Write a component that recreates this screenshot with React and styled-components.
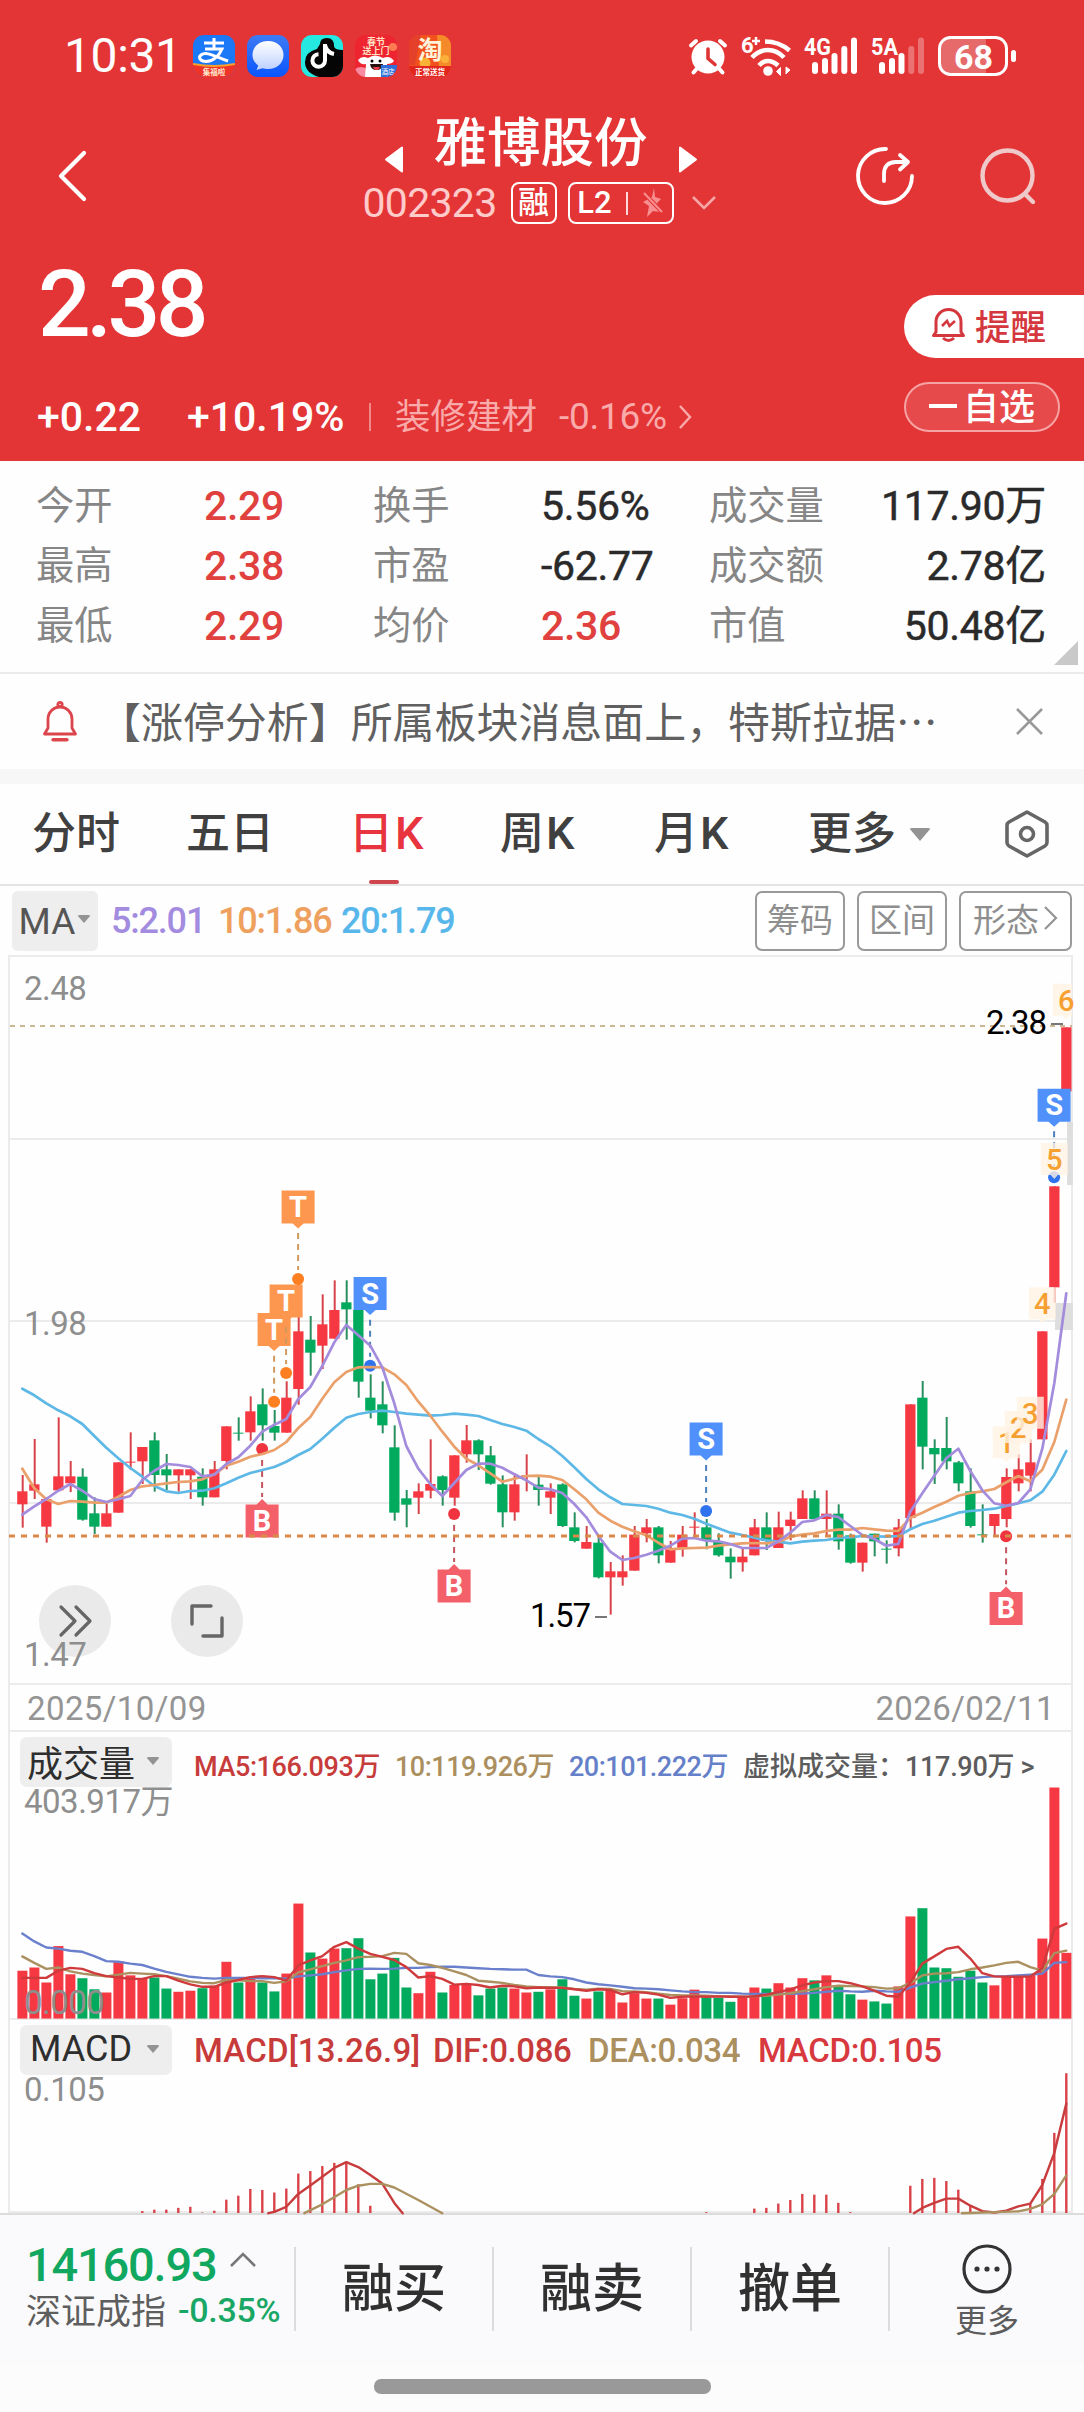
import React from 'react'
import styled, { createGlobalStyle, css } from 'styled-components'

const GlobalStyle = createGlobalStyle`
   * { box-sizing: border-box; }
   body {
      margin: 0;
      background: #fff;
      font-family: Roboto, "Noto Sans CJK SC", sans-serif;
      color: #333;
   }
   svg { display: block; flex: none; overflow: visible; }
   svg text { font-family: Roboto, "Noto Sans CJK SC", sans-serif; }
`

const RED = '#f53842'
const GREEN = '#02aa5d'

/* ---------- chart data ---------- */

// [direction, body top, body bottom, wick top, wick bottom]
const candles = [
   ['r', 934, 973, 885, 1043], ['r', 913, 932, 777, 957], ['r', 957, 1040, 952, 1088], ['r', 889, 931, 712, 931],
   ['r', 889, 910, 843, 936], ['g', 890, 1019, 865, 1022], ['g', 1000, 1040, 952, 1062], ['r', 1000, 1040, 970, 1040],
   ['r', 847, 998, 847, 998], ['r', 845, 848, 757, 870], ['r', 801, 844, 801, 912], ['g', 781, 885, 757, 935],
   ['g', 868, 886, 822, 930], ['r', 868, 886, 868, 935], ['r', 868, 886, 868, 957], ['g', 890, 952, 865, 977],
   ['r', 868, 952, 843, 952], ['r', 739, 843, 739, 868], ['g', 758, 761, 712, 782], ['r', 694, 757, 649, 782],
   ['g', 673, 736, 625, 782], ['g', 738, 758, 690, 782], ['r', 653, 758, 604, 758], ['r', 454, 627, 300, 674],
   ['g', 479, 518, 408, 587], ['r', 433, 497, 343, 567], ['r', 390, 476, 301, 476], ['g', 367, 388, 301, 479],
   ['g', 390, 605, 363, 653], ['g', 653, 692, 583, 715], ['g', 673, 736, 604, 760], ['g', 802, 998, 736, 1022],
   ['g', 955, 974, 930, 1042], ['r', 934, 953, 910, 1002], ['r', 912, 932, 778, 955], ['g', 889, 930, 886, 977],
   ['r', 826, 953, 826, 977], ['r', 781, 823, 735, 848], ['g', 781, 823, 778, 870], ['g', 826, 911, 798, 914],
   ['g', 913, 997, 886, 1042], ['r', 913, 997, 880, 1022], ['r', 886, 889, 823, 934], ['g', 914, 930, 890, 977],
   ['r', 934, 953, 910, 1002], ['g', 913, 1038, 910, 1041], ['g', 1042, 1083, 997, 1087], ['r', 1086, 1106, 1038, 1106],
   ['g', 1088, 1192, 1065, 1195], ['r', 1174, 1192, 1146, 1304], ['r', 1174, 1192, 1126, 1217], ['r', 1064, 1172, 1038, 1172],
   ['r', 1042, 1060, 1017, 1087], ['g', 1042, 1126, 1038, 1150], ['r', 1108, 1148, 1083, 1148], ['r', 1064, 1106, 1038, 1130],
   ['r', 1040, 1043, 997, 1070], ['g', 1042, 1083, 1017, 1108], ['g', 1085, 1126, 1060, 1130], ['g', 1130, 1147, 1105, 1196],
   ['r', 1130, 1147, 1105, 1175], ['r', 1042, 1126, 1017, 1126], ['g', 1042, 1083, 997, 1110], ['r', 1042, 1104, 995, 1104],
   ['r', 1019, 1038, 995, 1081], ['r', 955, 1017, 931, 1017], ['g', 955, 1017, 931, 1017], ['r', 1001, 1017, 931, 1068],
   ['g', 1001, 1084, 973, 1109], ['g', 1066, 1148, 1061, 1151], ['r', 1088, 1148, 1088, 1175], ['g', 1061, 1084, 1061, 1129],
   ['g', 1106, 1109, 1081, 1151], ['r', 1042, 1105, 1017, 1129], ['r', 673, 1014, 673, 1047], ['g', 653, 800, 603, 868],
   ['g', 804, 823, 778, 912], ['g', 804, 844, 711, 868], ['g', 847, 910, 843, 934], ['g', 934, 1038, 865, 1043],
   ['g', 1063, 1066, 973, 1088], ['r', 1002, 1038, 1002, 1066], ['r', 891, 1017, 865, 1042], ['r', 868, 910, 823, 934],
   ['r', 847, 887, 778, 934], ['r', 454, 778, 454, 778], ['r', 19, 322, 19, 368], ['r', -458, -266, -458, -266],
]

const ma5 = [1004, 979, 957, 932, 912, 932, 957, 966, 958, 948, 900, 872, 852, 855, 861, 889, 884, 852, 832, 797, 755, 734, 717, 657, 621, 558, 487, 435, 466, 497, 562, 670, 798, 866, 912, 948, 909, 870, 851, 851, 863, 883, 901, 923, 928, 939, 972, 1012, 1067, 1115, 1140, 1134, 1124, 1112, 1097, 1076, 1074, 1082, 1084, 1092, 1104, 1104, 1104, 1084, 1058, 1026, 1021, 1005, 1011, 1038, 1065, 1077, 1097, 1092, 995, 940, 887, 835, 806, 873, 931, 970, 977, 969, 928, 806, 610, 340]
const ma10 = [866, 925, 958, 972, 963, 965, 968, 968, 950, 930, 919, 915, 910, 906, 904, 898, 883, 857, 845, 830, 822, 810, 786, 744, 711, 656, 607, 576, 562, 561, 562, 583, 615, 665, 707, 755, 800, 836, 856, 880, 905, 896, 888, 887, 890, 900, 928, 958, 998, 1022, 1040, 1054, 1066, 1088, 1108, 1105, 1104, 1103, 1097, 1093, 1090, 1089, 1090, 1086, 1070, 1064, 1060, 1053, 1049, 1049, 1044, 1048, 1052, 1053, 1014, 998, 981, 965, 947, 939, 934, 927, 907, 888, 904, 869, 786, 659]
const ma20 = [626, 646, 670, 691, 709, 732, 768, 803, 835, 864, 890, 918, 934, 939, 933, 932, 925, 910, 893, 879, 870, 861, 845, 825, 807, 776, 743, 713, 702, 696, 692, 696, 701, 704, 707, 705, 701, 704, 708, 720, 732, 741, 752, 777, 799, 828, 862, 897, 928, 952, 972, 975, 978, 986, 998, 1005, 1016, 1031, 1045, 1058, 1065, 1073, 1081, 1085, 1090, 1085, 1082, 1080, 1074, 1072, 1068, 1069, 1070, 1068, 1048, 1032, 1022, 1010, 998, 993, 990, 986, 978, 970, 961, 935, 884, 813]

const volumes = [870, 861, 903, 801, 880, 891, 922, 931, 843, 883, 893, 889, 920, 929, 926, 919, 912, 845, 903, 889, 903, 928, 878, 682, 819, 836, 808, 807, 779, 894, 878, 834, 917, 933, 873, 931, 910, 910, 939, 920, 917, 920, 931, 929, 922, 894, 940, 948, 928, 926, 959, 933, 948, 948, 965, 947, 923, 945, 946, 957, 945, 917, 920, 905, 917, 891, 897, 883, 915, 936, 951, 956, 962, 914, 718, 695, 861, 863, 887, 870, 903, 911, 885, 885, 880, 780, 357, 820]
const vol5 = [890, 890, 890, 870, 862, 865, 877, 885, 889, 893, 893, 885, 885, 898, 908, 915, 915, 903, 896, 888, 885, 888, 898, 855, 841, 829, 803, 790, 808, 823, 831, 840, 860, 889, 885, 893, 909, 907, 910, 917, 912, 914, 919, 917, 918, 918, 922, 926, 922, 924, 936, 930, 932, 937, 946, 943, 942, 943, 942, 943, 943, 942, 937, 930, 922, 911, 903, 899, 899, 905, 914, 926, 940, 943, 903, 850, 830, 809, 803, 836, 877, 886, 887, 887, 886, 863, 753, 738]
const vol10 = [830, 848, 865, 861, 872, 878, 882, 886, 881, 876, 878, 880, 885, 892, 900, 904, 905, 896, 897, 899, 899, 904, 900, 875, 866, 857, 848, 841, 832, 831, 829, 820, 823, 849, 854, 862, 872, 882, 898, 901, 904, 910, 914, 916, 916, 917, 921, 923, 920, 921, 927, 928, 930, 934, 938, 939, 939, 940, 942, 942, 943, 942, 940, 937, 933, 927, 922, 916, 912, 913, 914, 916, 920, 919, 905, 883, 878, 877, 874, 866, 861, 855, 848, 845, 860, 870, 821, 814]
const vol20 = [766, 788, 805, 808, 814, 817, 829, 843, 845, 850, 854, 864, 873, 880, 887, 890, 892, 890, 890, 890, 891, 891, 892, 886, 883, 880, 874, 869, 865, 864, 865, 864, 862, 862, 860, 859, 859, 861, 863, 865, 866, 867, 867, 882, 886, 888, 894, 903, 908, 911, 915, 919, 920, 922, 925, 928, 930, 930, 932, 932, 934, 935, 935, 935, 935, 934, 932, 929, 926, 928, 929, 926, 928, 929, 917, 906, 902, 898, 894, 891, 888, 886, 885, 883, 881, 878, 848, 846]

// [candle index, value]
const macdBars = [[10, 1543], [11, 1539], [12, 1539], [13, 1534], [14, 1531], [15, 1547], [16, 1542], [17, 1511], [18, 1500], [19, 1481], [20, 1484], [21, 1491], [22, 1480], [23, 1438], [24, 1431], [25, 1417], [26, 1408], [27, 1404], [28, 1468], [29, 1528], [57, 1546], [61, 1536], [62, 1534], [63, 1522], [64, 1512], [65, 1495], [66, 1497], [67, 1497], [68, 1520], [69, 1546], [74, 1472], [75, 1453], [76, 1450], [77, 1459], [78, 1483], [79, 1527], [84, 1522], [85, 1453], [86, 1324], [87, 1157]]
const dif = [
   [[20.5, 1549], [21, 1545], [22, 1531], [23, 1495], [24, 1471], [25, 1447], [26, 1422], [27, 1406], [28, 1420], [29, 1442], [30, 1466], [31, 1520], [31.7, 1549]],
   [[74.3, 1549], [75, 1534], [76, 1520], [77, 1508], [78, 1508], [79, 1528], [80, 1543], [81, 1547], [82, 1542], [83, 1530], [84, 1522], [85, 1470], [86, 1380], [87, 1242]],
]
const dea = [
   [[23.5, 1549], [25, 1524], [27, 1484], [28, 1472], [29, 1467], [30, 1467], [31, 1477], [33, 1512], [35, 1549]],
   [[78.3, 1549], [81, 1546], [83, 1544], [84, 1537], [85, 1524], [86, 1495], [87, 1443]],
]

const signals = [
   { type: 'T', at: 21, dot: 665 }, { type: 'T', at: 22, dot: 579 }, { type: 'T', at: 23, dot: 297 },
   { type: 'S', at: 29, dot: 557 }, { type: 'S', at: 57, dot: 993 }, { type: 'S', at: 86, dot: -8 },
   { type: 'B', at: 20, dot: 807 }, { type: 'B', at: 36, dot: 1002 }, { type: 'B', at: 82, dot: 1069 },
]
const signalColors = {
   T: ['#fd9750', '#fd7f22', '#d09a5c'],
   S: ['#5090fa', '#2f74ee', '#4c80bb'],
   B: ['#f4606a', '#f0343f', '#c4555e'],
}
const streak = [[1, 82, 739], [2, 83, 693], [3, 84, 650], [4, 85, 322], [5, 86, -111], [6, 87, -589]]

const xAt = (i) => 12.3 + 12 * i
const priceY = (v) => 223 + v / 3
const volY = (v) => v / 2.8 - 72
const macdY = (v) => v / 2.8 - 360
const linePoints = (list, toY) => list.map((v, i) => `${xAt(i)},${toY(v).toFixed(1)}`).join(' ')
const pairPoints = (list, toY) => list.map(([i, v]) => `${xAt(i)},${toY(v).toFixed(1)}`).join(' ')

/* ---------- header ---------- */

const Page = styled.div`
   width: 1084px;
   height: 2412px;
   display: flex;
   flex-direction: column;
   overflow: hidden;
   background: #fefefe;
`

const Header = styled.header`
   height: 461px;
   background: #e33536;
   color: #fff;
`

const StatusBar = styled.div`
   height: 112px;
   display: flex;
   align-items: center;
   justify-content: space-between;
   padding: 0 67px 0 64px;
`

const StatusGroup = styled.div`
   display: flex;
   align-items: center;
   gap: ${(p) => p.$gap || 12}px;
`

const Clock = styled.span`
   width: 117px;
   font-size: 48px;
   line-height: 50px;
   letter-spacing: -0.4px;
`

const NavBar = styled.div`
   height: 128px;
   display: grid;
   grid-template-columns: 1fr auto 1fr;
   align-items: center;
   padding: 0 49px 0 58px;
`

const NavCenter = styled.div`
   align-self: start;
   display: flex;
   flex-direction: column;
   align-items: center;
   margin-left: -12px;
`

const NavActions = styled.div`
   display: flex;
   justify-content: flex-end;
   align-items: center;
   gap: 66px;
`

const TitleRow = styled.div`
   display: flex;
   gap: 30px;
   height: 58px;

   svg { margin-top: 34px; }
`

const Title = styled.h1`
   margin: 0;
   font-size: 53.5px;
   font-weight: 500;
   line-height: 63px;
`

const CodeRow = styled.div`
   display: flex;
   align-items: center;
   height: 42px;
   margin: 12px 3px 0 0;
`

const Code = styled.span`
   margin-right: 14px;
   font-size: 41px;
   letter-spacing: -0.7px;
   color: #ffcaca;
`

const Tag = styled.span`
   display: flex;
   align-items: center;
   justify-content: center;
   height: 42px;
   width: ${(p) => p.$width}px;
   margin-right: ${(p) => p.$after}px;
   gap: 14px;
   border: 2px solid #fff;
   border-radius: 8px;
   font-size: 31px;
   font-weight: 500;
   line-height: 36px;
`

const TagLine = styled.i`
   width: 2px;
   height: 23px;
   background: #ffd9d9;
`

const QuoteTop = styled.div`
   display: flex;
   justify-content: space-between;
`

const Price = styled.div`
   margin: 19px 0 0 38px;
   font-size: 93px;
   font-weight: 500;
   line-height: 92px;
   letter-spacing: -4.6px;
`

const ChangeRow = styled.div`
   display: flex;
   align-items: center;
   height: 46px;
   margin: 43px 0 0 37px;
   font-size: 41px;
   font-weight: 500;
   line-height: 46px;
`

const ChangeItem = styled.span`
   width: ${(p) => p.$width}px;
   white-space: nowrap;
`

const Sector = styled.span`
   display: flex;
   align-items: center;
   gap: 22px;
   padding-left: 24px;
   border-left: 2px solid #ee8a8a;
   height: 28px;
   font-size: 35.5px;
   font-weight: 400;
   color: #f9abab;

   b { font-size: 37px; font-weight: 400; margin-right: -10px; letter-spacing: -0.3px; }
`

const SideButtons = styled.div`
   display: flex;
   flex-direction: column;
   align-items: flex-end;
   padding-top: 55px;
`

const RemindButton = styled.button`
   display: flex;
   align-items: center;
   gap: 10px;
   width: 180px;
   height: 63px;
   padding: 0 0 4px 28px;
   border: 0;
   border-radius: 32px 0 0 32px;
   background: #fff;
   color: #d4373d;
   font: 500 35.5px/40px "Noto Sans CJK SC", sans-serif;
`

const WatchButton = styled.button`
   display: flex;
   align-items: center;
   justify-content: center;
   gap: 6px;
   width: 156px;
   height: 50px;
   margin: 24px 24px 0 0;
   padding: 0 0 6px;
   border: 2px solid #f5a3a4;
   border-radius: 26px;
   background: #e64a4b;
   color: #fff;
   font: 500 36px/40px "Noto Sans CJK SC", sans-serif;
`

const Minus = styled.i`
   width: 28px;
   height: 4px;
   margin-top: 4px;
   background: #fff;
`

/* ---------- quote figures ---------- */

const Stats = styled.section`
   position: relative;
   height: 211px;
   display: grid;
   grid-template-columns: 168px 169px 168px 168px 120px 1fr;
   grid-auto-rows: 60px;
   align-items: center;
   padding: 15px 38px 0 36px;
`

const StatLabel = styled.span`
   font-size: 38.3px;
   line-height: 60px;
   white-space: nowrap;
   color: #868686;
`

const StatValue = styled.span`
   justify-self: ${(p) => (p.$last ? 'end' : 'start')};
   font-size: 41px;
   font-weight: ${(p) => (p.$up ? 500 : 400)};
   line-height: 60px;
   letter-spacing: -0.3px;
   white-space: nowrap;
   color: ${(p) => (p.$up ? '#e0413f' : '#2a2a2a')};
   -webkit-text-stroke: ${(p) => (p.$up ? 0 : 0.5)}px #2a2a2a;
`

const Corner = styled.i`
   position: absolute;
   right: 6px;
   bottom: 7px;
   border-style: solid;
   border-width: 0 0 24px 24px;
   border-color: transparent transparent #c9c9c9;
`

const Notice = styled.section`
   height: 97px;
   display: flex;
   align-items: center;
   padding: 0 41px 0 43px;
   border-top: 2px solid #ebebeb;
`

const NoticeText = styled.p`
   flex: 1;
   margin: 0 0 4px 22px;
   font: 400 41.95px/60px "Noto Sans CJK SC", sans-serif;
   color: #606060;
   white-space: nowrap;
`

const Tabs = styled.nav`
   height: 117px;
   display: grid;
   grid-template-columns: 154px 163px 151px 154px 154px 197px auto;
   align-items: center;
   padding-left: 32px;
   border-top: 15px solid #f7f7f7;
   border-bottom: 2px solid #e4e4e4;
`

const Tab = styled.span`
   position: relative;
   display: flex;
   align-items: center;
   gap: 13px;
   height: 100%;
   font-size: 44px;
   font-weight: 500;
   line-height: 60px;
   color: #404040;

   ${(p) => p.$active && css`
      color: #e8343f;
      &::after {
         content: '';
         position: absolute;
         left: 20px;
         bottom: 0;
         width: 30px;
         height: 4px;
         border-radius: 2px;
         background: #cf454e;
      }
   `}
`

const Kay = styled.span`
   margin-left: -11px;
   font-size: 45px;
`

const Caret = styled.i`
   border-style: solid;
   border-color: #939393 transparent transparent;
   border-width: ${(p) => `${p.$size * 0.62}px ${p.$size / 2}px 0`};
   border-radius: 3px;
`

const MaBar = styled.div`
   height: 69px;
   display: flex;
   align-items: center;
   padding: 1px 12px 0;
`

const MaPick = styled.span`
   display: flex;
   align-items: center;
   justify-content: center;
   gap: 2px;
   width: 86px;
   height: 60px;
   margin-right: 13px;
   border-radius: 6px;
   background: #eee;
   font-size: 37px;
   color: #555;

   i { margin-top: -4px; }
`

const MaValue = styled.span`
   width: ${(p) => p.$width}px;
   font-size: 36px;
   font-weight: 500;
   letter-spacing: -1.2px;
   white-space: nowrap;
   color: ${(p) => p.$color};
`

const ToolButton = styled.button`
   display: flex;
   align-items: center;
   justify-content: center;
   gap: 5px;
   width: ${(p) => p.$width || 90}px;
   height: 60px;
   margin-left: 12px;
   padding: 0 0 6px;
   border: 2px solid #999;
   border-radius: 7px;
   background: #fff;
   color: #8e8e8e;
   font: 400 33px/50px "Noto Sans CJK SC", sans-serif;
   white-space: nowrap;
`

const Spacer = styled.div`
   flex: 1;
`

/* ---------- charts ---------- */

const Charts = styled.section`
   width: 1065px;
   height: 1258px;
   margin-left: 8px;
   border: 2px solid #ebebeb;
   border-bottom: 0;
`

const Panel = styled.div`
   position: relative;
   height: ${(p) => p.$height}px;
   border-bottom: 2px solid #ebebeb;
`

const DateRow = styled.div`
   height: 47px;
   display: flex;
   align-items: center;
   justify-content: space-between;
   padding: 1px 16px 0 17px;
   border-bottom: 2px solid #ebebeb;
   font-size: 33px;
   letter-spacing: 0.4px;
   color: #949494;
`

const AxisLabel = styled.span`
   position: absolute;
   left: ${(p) => p.$left || 14}px;
   top: ${(p) => p.$y - 20}px;
   font-size: 33px;
   line-height: 40px;
   letter-spacing: -0.5px;
   color: #8e8e8e;
`

const ChartButton = styled.span`
   position: absolute;
   left: ${(p) => p.$left}px;
   top: 628px;
   width: 72px;
   height: 72px;
   display: flex;
   align-items: center;
   justify-content: center;
   border-radius: 50%;
   background: #eaeaea;
`

const Canvas = styled.svg`
   position: absolute;
   left: 0;
   top: 0;
`

const Legend = styled.div`
   position: relative;
   display: flex;
   align-items: center;
   height: 55px;
   padding: 5px 0 0 10px;
`

const IndicatorPick = styled.span`
   display: flex;
   align-items: center;
   justify-content: space-between;
   width: 152px;
   height: 50px;
   margin-right: 22px;
   padding: 0 12px 2px ${(p) => p.$inset}px;
   border-radius: 7px;
   background: #eee;
   font-size: 36px;
   color: #2e2e2e;
`

const LegendItem = styled.span`
   width: ${(p) => p.$width}px;
   padding-top: ${(p) => (p.$large ? 1 : 5)}px;
   font-size: ${(p) => (p.$large ? 33 : 27)}px;
   font-weight: 500;
   letter-spacing: ${(p) => p.$track || 0}px;
   white-space: nowrap;
   color: ${(p) => p.$color};
`

/* ---------- footer ---------- */

const Footer = styled.footer`
   height: 150px;
   display: grid;
   grid-template-columns: 294px 198px 198px 198px 1fr;
   align-items: start;
   padding-top: 32px;
   border-top: 2px solid #dcdcdc;
   background: #fafafc;
`

const IndexBox = styled.div`
   margin-top: -2px;
   padding-left: 26px;
`

const IndexValue = styled.div`
   display: flex;
   align-items: center;
   gap: 14px;
   height: 38px;
   font-size: 47px;
   letter-spacing: -1.2px;
   font-weight: 500;
   color: #10a860;

   svg { margin-top: -8px; }
`

const IndexName = styled.div`
   display: flex;
   align-items: center;
   gap: 12px;
   height: 46px;
   margin-top: 2px;
   font-size: 35px;
   color: #5e5e5e;
   white-space: nowrap;

   b { font-size: 34px; font-weight: 500; letter-spacing: -0.3px; color: #18a764; padding-top: 4px; }
`

const Action = styled.div`
   height: 84px;
   display: flex;
   flex-direction: column;
   align-items: center;
   justify-content: center;
   padding-bottom: 9px;
   border-left: 2px solid #dcdcde;
   font-size: 52px;
   font-weight: 500;
   color: #303030;
`

const MoreText = styled.span`
   margin-top: 7px;
   font-size: 32px;
   font-weight: 400;
   line-height: 40px;
   color: #5c5c5c;
`

const MoreAction = styled(Action)`
   justify-content: flex-start;
   padding: 0;

   svg { margin-top: -3px; }
`

const HomeArea = styled.div`
   flex: 1;
   display: flex;
   justify-content: center;
   padding-top: 16px;
   background: #fcfcfc;
`

const HomeBar = styled.div`
   width: 337px;
   height: 15px;
   border-radius: 7px;
   background: #999;
`

/* ---------- icons ---------- */

const PayIcon = () => (
   <svg width="42" height="42" viewBox="0 0 42 42">
      <clipPath id="pay"><rect width="42" height="42" rx="11" /></clipPath>
      <g clipPath="url(#pay)">
         <rect width="42" height="42" fill="#1b78f7" />
         <path d="M11 8h20M21 3v10M12 14h17c-3 7-9 12.500-16 12.500-6 0-8-4-5-6.500 5-4 13 1 27 6" fill="none" stroke="#fff" strokeWidth="3" />
         <path d="M0 29q21 4 42 0v13H0z" fill="#ef3328" />
         <path d="M0 29q21 4 42 0" fill="none" stroke="#f9a02c" strokeWidth="2" />
         <text x="21" y="39.5" fontSize="7.5" fontWeight="700" fill="#ffe9d0" textAnchor="middle">集福啦</text>
      </g>
   </svg>
)

const ChatIcon = () => (
   <svg width="42" height="42" viewBox="0 0 42 42">
      <defs>
         <linearGradient id="chatBg" x1="0" y1="0" x2="0" y2="1"><stop offset="0" stopColor="#3d7bf5" /><stop offset="1" stopColor="#0a55ff" /></linearGradient>
         <linearGradient id="chatFg" x1="0" y1="0" x2="0" y2="1"><stop offset="0" stopColor="#fff" /><stop offset="1" stopColor="#bcd0ff" /></linearGradient>
      </defs>
      <rect width="42" height="42" rx="11" fill="url(#chatBg)" />
      <path d="M21 6c9 0 15.500 6 15.500 14S30 34 21 34c-2 0-4-.3-5.500-.8L9.500 35l1.800-4.500C7.800 28 5.500 24.500 5.500 20 5.500 12 12 6 21 6z" fill="url(#chatFg)" />
   </svg>
)

const MusicIcon = () => (
   <svg width="42" height="42" viewBox="0 0 42 42">
      <clipPath id="music"><rect width="42" height="42" rx="11" /></clipPath>
      <g clipPath="url(#music)">
         <rect width="42" height="42" fill="#25e8e0" />
         <path d="M19 9q0-6 7-6 7 0 7 8 0 4 9 4v27H18Q4 38 4 27q0-10 12-13z" fill="#050505" />
         <path d="M24 9v16.500a6.300 6.300 0 1 1-6.500-6.300M24 10c1 5 4 8 9 9" fill="none" stroke="#fff" strokeWidth="4" />
      </g>
   </svg>
)

const DogIcon = () => (
   <svg width="42" height="42" viewBox="0 0 42 42">
      <clipPath id="dog"><rect width="42" height="42" rx="11" /></clipPath>
      <g clipPath="url(#dog)">
         <rect width="42" height="42" fill="#ee2430" />
         <circle cx="38" cy="12" r="4" fill="#ff7b52" />
         <path d="M0 34q6-4 12 0v8H0z" fill="#f98aa0" />
         <path d="M3 25q4-5 10-2 7-5 15 0 7-3 11 3-2 3-7 3l1 13H10l1-13q-6 1-8-4z" fill="#fff" />
         <circle cx="17" cy="26" r="1.500" /><circle cx="25" cy="26" r="1.500" />
         <path d="M15 29h13q-1 6-6.500 6T15 29z" fill="#26120f" />
         <path d="M18 32h7q-1 3-3.500 3T18 32z" fill="#ee4050" />
         <text x="21" y="10" fontSize="9" fontWeight="700" fill="#ffe3c4" textAnchor="middle">春节</text>
         <text x="21" y="19" fontSize="9" fontWeight="700" fill="#ffe3c4" textAnchor="middle">送上门</text>
         <rect x="26" y="30" width="16" height="12" fill="#2e70d8" />
         <text x="33" y="39" fontSize="6.500" fill="#fff" textAnchor="middle">酒店</text>
      </g>
   </svg>
)

const ShopIcon = () => (
   <svg width="42" height="42" viewBox="0 0 42 42">
      <clipPath id="shop"><rect width="42" height="42" rx="11" /></clipPath>
      <g clipPath="url(#shop)">
         <rect width="42" height="42" fill="#f2501c" />
         <path d="M28 0h14v34H30z" fill="#f58a2a" />
         <path d="M0 0h12L6 30H0z" fill="#e4402a" />
         <circle cx="16" cy="28" r="5.500" fill="#f9b233" /><circle cx="36" cy="24" r="4" fill="#fbb03b" />
         <text x="21" y="24" fontSize="25" fontWeight="700" fill="#fff2d8" textAnchor="middle">淘</text>
         <path d="M0 31h42v11H0z" fill="#e2261d" />
         <text x="21" y="39.500" fontSize="7.500" fontWeight="700" fill="#fff" textAnchor="middle">正常送货</text>
      </g>
   </svg>
)

const AlarmIcon = () => (
   <svg width="40" height="38" viewBox="0 0 40 38" fill="none" stroke="#fff" strokeWidth="4" strokeLinecap="round">
      <circle cx="20" cy="20" r="16.500" fill="#fff" stroke="none" />
      <path d="M3 8.500L8 4M37 8.500L32 4M8.500 32l-3 3.500M31.500 32l3 3.500" />
      <path d="M20 12v9.500l7 6" stroke="#df3536" strokeWidth="3.600" />
   </svg>
)

const WifiIcon = () => (
   <svg width="50" height="40" viewBox="0 0 50 40" fill="none" stroke="#fff" strokeWidth="4.600">
      <text x="0" y="17" fontSize="22" fontWeight="700" fill="#fff" stroke="none" textLength="11">6</text>
      <path d="M11 5h8M15 1v8" strokeWidth="2.400" />
      <path d="M24 5.500q14 0 24.500 9M11 21.500q7-7.500 16-7.500t16 7.500M18 29.500q4-4.500 9-4.500t10 4.500" />
      <circle cx="27" cy="35" r="4.800" fill="#fff" stroke="none" />
      <path d="M35.500 35.500l4-4v8zM49 34l-4 4v-7z" strokeWidth="1" fill="#fff" />
   </svg>
)

const SignalIcon = ({ label, weak }) => (
   <svg width="54" height="38" viewBox="0 0 54 38" fill="#fff">
      <text x="0" y="18" fontSize="24" fontWeight="700" textLength="27" lengthAdjust="spacingAndGlyphs">{label}</text>
      {[[8, 25], [18, 21], [27.5, 16], [37.3, 9], [47, 0.5]].map(([x, y], i) => (
         <rect key={x} x={x} y={y} width="6" height={37 - y} rx="3" opacity={weak && i > 2 ? 0.3 : 1} />
      ))}
   </svg>
)

const BatteryIcon = () => (
   <svg width="79" height="40" viewBox="0 0 79 40">
      <path d="M12 2h36v36H12A10 10 0 0 1 2 28V12A10 10 0 0 1 12 2z" fill="#e66a6a" />
      <rect x="1.500" y="1.500" width="67" height="37" rx="11" fill="none" stroke="#fff" strokeWidth="3" />
      <rect x="73" y="14" width="5" height="12" rx="2.500" fill="#fff" />
      <text x="35.500" y="32.500" fontSize="34" fontWeight="700" fill="#fff" textAnchor="middle">68</text>
   </svg>
)

const BackIcon = () => (
   <svg width="28" height="50" viewBox="0 0 28 50" fill="none" stroke="#fff" strokeWidth="4.200" strokeLinecap="round" strokeLinejoin="round">
      <path d="M26 2L3 25l23 23" />
   </svg>
)

const ArrowLeft = () => (
   <svg width="19" height="27" viewBox="0 0 19 27"><path d="M1 13.500L17 1.500v24z" fill="#fff" stroke="#fff" strokeWidth="2" strokeLinejoin="round" /></svg>
)

const ArrowRight = () => (
   <svg width="19" height="27" viewBox="0 0 19 27"><path d="M18 13.500L2 1.500v24z" fill="#fff" stroke="#fff" strokeWidth="2" strokeLinejoin="round" /></svg>
)

const FlashOffIcon = () => (
   <svg width="22" height="30" viewBox="0 0 22 30">
      <path d="M12 0L10 9 1 14l6 4-2 11 6-6 7 1-3-9 4-4-6-2z" fill="#f78f90" />
      <path d="M1 4l19 20" stroke="#e33536" strokeWidth="4" />
      <path d="M2 5l18 19" stroke="#f78f90" strokeWidth="2" />
   </svg>
)

const ChevronDown = () => (
   <svg width="24" height="14" viewBox="0 0 24 14" fill="none" stroke="#f7a6a6" strokeWidth="2.600"><path d="M1 1l11 11L23 1" /></svg>
)

const ShareIcon = () => (
   <svg width="58" height="58" viewBox="0 0 58 58" fill="none" stroke="#fff" strokeWidth="3.800" strokeLinecap="round" strokeLinejoin="round">
      <path d="M30 2A27 27 0 1 0 56 29" />
      <path d="M28 34v-7q0-12 12-12h12M44 8l8 7-8 7.500" />
   </svg>
)

const SearchIcon = () => (
   <svg width="55" height="56" viewBox="0 0 55 56" fill="none" stroke="#efc9ca" strokeWidth="4.400" strokeLinecap="round">
      <circle cx="27.500" cy="27.500" r="25" />
      <path d="M45 46l8 8" />
   </svg>
)

const PulseBell = () => (
   <svg width="33" height="35" viewBox="0 0 33 35" fill="none" stroke="#d4373d" strokeWidth="3">
      <path d="M4 25V15a12.500 12.500 0 0 1 25 0v10l2.500 3.500h-30z" strokeLinejoin="round" />
      <path d="M11 31q5.500 5 11 0" />
      <path d="M10 19l5-5 2.500 5 5.500-5" strokeWidth="2.600" />
   </svg>
)

const BellIcon = () => (
   <svg width="34" height="41" viewBox="0 0 34 41" fill="none" stroke="#dd454c" strokeWidth="2.800" strokeLinejoin="round">
      <circle cx="17" cy="3.500" r="2.200" />
      <path d="M5 27V18a12 12 0 0 1 24 0v9l3.500 6h-31z" />
      <path d="M10 38.800h14" strokeWidth="3.400" strokeLinecap="round" />
   </svg>
)

const CloseIcon = () => (
   <svg width="27" height="27" viewBox="0 0 27 27" stroke="#999" strokeWidth="2.600"><path d="M1 1l25 25M26 1L1 26" /></svg>
)

const HexIcon = () => (
   <svg width="44" height="48" viewBox="0 0 44 48" fill="none" stroke="#666" strokeWidth="3.600" strokeLinejoin="round">
      <path d="M22 2l18 10q2 1.200 2 3.400v17.200q0 2.200-2 3.400L22 46 4 36q-2-1.200-2-3.400V15.400Q2 13.200 4 12z" />
      <circle cx="22" cy="24" r="6.500" />
   </svg>
)

const MoreIcon = () => (
   <svg width="50" height="50" viewBox="0 0 50 50" fill="#333">
      <circle cx="25" cy="25" r="23" fill="none" stroke="#333" strokeWidth="3.200" />
      <circle cx="15" cy="25" r="2.600" /><circle cx="25" cy="25" r="2.600" /><circle cx="35" cy="25" r="2.600" />
   </svg>
)

/* ---------- chart pieces ---------- */

const Candle = ({ data, index }) => {
   const [dir, top, bottom, high, low] = data
   const x = xAt(index)
   return (
      <g fill={dir === 'r' ? RED : GREEN}>
         <rect x={x - 0.6} y={priceY(high)} width="2" height={(low - high) / 3} fill={dir === 'r' ? '#d8434a' : '#2a8f60'} />
         <rect x={x - 5.1} y={priceY(top)} width="10.3" height={(bottom - top) / 3} />
      </g>
   )
}

const Signal = ({ type, at, dot }) => {
   const [fill, dotFill, dash] = signalColors[type]
   const x = xAt(at) - 0.2
   const y = priceY(dot)
   const below = type === 'B'
   const top = below ? y + 55.6 : y - 88.6
   return (
      <g>
         <path d={below ? `M${x} ${y + 11}v37` : `M${x} ${y - 46}v37`} stroke={dash} strokeWidth="2" strokeDasharray="6 5" />
         <circle cx={x} cy={y} r="6" fill={dotFill} />
         <path
            fill={fill}
            d={below
               ? `M${x - 16.5} ${top}h11l5.500-5.500 5.500 5.500h11v33h-33z`
               : `M${x - 16.5} ${top}h33v33h-11l-5.500 5-5.500-5h-11z`}
         />
         <text x={x} y={top + 26.5} fontSize="29" fontWeight="700" fill="#fff" textAnchor="middle">{type}</text>
      </g>
   )
}

const StreakTag = ({ n, at, top }) => {
   const x = xAt(at)
   const y = priceY(top)
   const right = Math.min(x + 13.5, 1062)
   return (
      <g>
         <path d={`M${x - 13.5} ${y}H${right}v32H${x + 3.5}l-3.500 4-3.500-4h-10z`} fill="#fff3e4" opacity="0.8" />
         <text x={x} y={y + 27} fontSize="29" fontWeight="500" fill="#f5a031" textAnchor="middle">{n}</text>
      </g>
   )
}

const Line = ({ points, color, width = 2.7 }) => (
   <polyline points={points} fill="none" stroke={color} strokeWidth={width} strokeLinejoin="round" strokeLinecap="round" />
)

const PriceChart = () => (
   <Panel $height={728}>
      <ChartButton $left={29}>
         <svg width="34" height="34" viewBox="0 0 34 34" fill="none" stroke="#666" strokeWidth="3.200" strokeLinecap="round" strokeLinejoin="round">
            <path d="M3 3l14 14L3 31M18 3l14 14-14 14" />
         </svg>
      </ChartButton>
      <ChartButton $left={161}>
         <svg width="34" height="34" viewBox="0 0 34 34" fill="none" stroke="#666" strokeWidth="3.400" strokeLinecap="round" strokeLinejoin="round">
            <path d="M2 20V2h19M32 14v18H13" />
         </svg>
      </ChartButton>
      <Canvas width="1062" height="728" viewBox="0 0 1062 728">
         <path d="M0 182h1062M0 364h1062M0 546h1062" stroke="#ebebeb" strokeWidth="2" />
         <rect x="1057" y="165" width="6" height="63" fill="#dedede" />
         <rect x="1045" y="346" width="18" height="27" fill="#dedede" />
         <path d="M0 69H1062" stroke="#cbb792" strokeWidth="1.800" strokeDasharray="5 5" />
         {candles.map((c, i) => <Candle key={i} data={c} index={i} />)}
         {signals.map((s) => <Signal key={`${s.type}${s.at}`} {...s} />)}
         <Line points={linePoints(ma20, priceY)} color="#5db8e6" />
         <Line points={linePoints(ma10, priceY)} color="#eaa06a" />
         <Line points={linePoints(ma5, priceY)} color="#a38cdc" />
         <path d="M-1 579H1062" stroke="#d98a4a" strokeWidth="3" strokeDasharray="6 6" />
         {streak.map(([n, at, top]) => <StreakTag key={n} n={n} at={at} top={top} />)}
         <text x="976" y="76.500" fontSize="33" textLength="61">2.38</text>
         <text x="520" y="670" fontSize="33" textLength="61">1.57</text>
         <path d="M1041 67h12M585 660h12" stroke="#777" strokeWidth="2" />
      </Canvas>
      <AxisLabel $y={32}>2.48</AxisLabel>
      <AxisLabel $y={367}>1.98</AxisLabel>
      <AxisLabel $y={698}>1.47</AxisLabel>
   </Panel>
)

const VolumeChart = () => (
   <Panel $height={288}>
      <Canvas width="1062" height="288" viewBox="0 0 1062 288">
         {volumes.map((v, i) => (
            <rect key={i} x={xAt(i) - 4.9} y={volY(v)} width="10" height={(1004 - v) / 2.8} fill={candles[i][0] === 'r' ? RED : GREEN} />
         ))}
         <Line points={linePoints(vol20, volY)} color="#6a80cc" width={2.4} />
         <Line points={linePoints(vol10, volY)} color="#ab9060" width={2.4} />
         <Line points={linePoints(vol5, volY)} color="#cf3a3c" width={2.4} />
      </Canvas>
      <Legend>
         <IndicatorPick $inset={7}>成交量<Caret $size={14} /></IndicatorPick>
         <LegendItem $width={201} $track={-0.4} $color="#c73b3b">MA5:166.093万</LegendItem>
         <LegendItem $width={174} $track={-0.5} $color="#ab8f5f">10:119.926万</LegendItem>
         <LegendItem $width={174} $track={-0.5} $color="#6580c8">20:101.222万</LegendItem>
         <LegendItem $width={162} $color="#5c5c5c">虚拟成交量：</LegendItem>
         <LegendItem $track={-0.3} $color="#5c5c5c">117.90万 &gt;</LegendItem>
      </Legend>
      <AxisLabel $left={14} $y={70}>403.917万</AxisLabel>
      <AxisLabel $left={14} $y={271}>0.000</AxisLabel>
   </Panel>
)

const MacdChart = () => (
   <Panel $height={193}>
      <Canvas width="1062" height="193" viewBox="0 0 1062 193">
         {macdBars.map(([i, v]) => (
            <rect key={i} x={xAt(i) - 1.2} y={macdY(v)} width="2.4" height={193 - macdY(v)} fill="#d9434a" />
         ))}
         {dif.map((part, i) => <Line key={i} points={pairPoints(part, macdY)} color="#c83c3d" width={2.4} />)}
         {dea.map((part, i) => <Line key={i} points={pairPoints(part, macdY)} color="#ab9060" width={2.4} />)}
      </Canvas>
      <Legend>
         <IndicatorPick $inset={10}>MACD<Caret $size={14} /></IndicatorPick>
         <LegendItem $large $width={239} $track={0.2} $color="#c73b3b">MACD[13.26.9]</LegendItem>
         <LegendItem $large $width={155} $track={-0.4} $color="#c73b3b">DIF:0.086</LegendItem>
         <LegendItem $large $width={170} $track={-0.3} $color="#ab8f5f">DEA:0.034</LegendItem>
         <LegendItem $large $track={-0.3} $color="#d8393f">MACD:0.105</LegendItem>
      </Legend>
      <AxisLabel $left={14} $y={70}>0.105</AxisLabel>
   </Panel>
)

const stats = [
   ['今开', '2.29', true, '换手', '5.56%', false, '成交量', '117.90万'],
   ['最高', '2.38', true, '市盈', '-62.77', false, '成交额', '2.78亿'],
   ['最低', '2.29', true, '均价', '2.36', true, '市值', '50.48亿'],
]

const App = () => {
   return (
      <Page>
         <GlobalStyle />
         <Header>
            <StatusBar>
               <StatusGroup>
                  <Clock>10:31</Clock>
                  <PayIcon />
                  <ChatIcon />
                  <MusicIcon />
                  <DogIcon />
                  <ShopIcon />
               </StatusGroup>
               <StatusGroup $gap={13}>
                  <AlarmIcon />
                  <WifiIcon />
                  <SignalIcon label="4G" />
                  <SignalIcon label="5A" weak />
                  <BatteryIcon />
               </StatusGroup>
            </StatusBar>
            <NavBar>
               <BackIcon />
               <NavCenter>
                  <TitleRow>
                     <ArrowLeft />
                     <Title>雅博股份</Title>
                     <ArrowRight />
                  </TitleRow>
                  <CodeRow>
                     <Code>002323</Code>
                     <Tag $width={46} $after={11}>融</Tag>
                     <Tag $width={106} $after={18}>L2<TagLine /><FlashOffIcon /></Tag>
                     <ChevronDown />
                  </CodeRow>
               </NavCenter>
               <NavActions>
                  <ShareIcon />
                  <SearchIcon />
               </NavActions>
            </NavBar>
            <QuoteTop>
               <div>
                  <Price>2.38</Price>
                  <ChangeRow>
                     <ChangeItem $width={150}>+0.22</ChangeItem>
                     <ChangeItem $width={182}>+10.19%</ChangeItem>
                     <Sector>
                        装修建材 <b>-0.16%</b>
                        <svg width="13" height="24" viewBox="0 0 13 24" fill="none" stroke="#f9abab" strokeWidth="2.400"><path d="M1 1l10 11L1 23" /></svg>
                     </Sector>
                  </ChangeRow>
               </div>
               <SideButtons>
                  <RemindButton><PulseBell />提醒</RemindButton>
                  <WatchButton><Minus />自选</WatchButton>
               </SideButtons>
            </QuoteTop>
         </Header>

         <Stats>
            {stats.map(([l1, v1, up1, l2, v2, up2, l3, v3]) => (
               <React.Fragment key={l1}>
                  <StatLabel>{l1}</StatLabel>
                  <StatValue $up={up1}>{v1}</StatValue>
                  <StatLabel>{l2}</StatLabel>
                  <StatValue $up={up2}>{v2}</StatValue>
                  <StatLabel>{l3}</StatLabel>
                  <StatValue $last>{v3}</StatValue>
               </React.Fragment>
            ))}
            <Corner />
         </Stats>

         <Notice>
            <BellIcon />
            <NoticeText>【涨停分析】所属板块消息面上，特斯拉据…</NoticeText>
            <CloseIcon />
         </Notice>

         <Tabs>
            <Tab>分时</Tab>
            <Tab>五日</Tab>
            <Tab $active>日<Kay>K</Kay></Tab>
            <Tab>周<Kay>K</Kay></Tab>
            <Tab>月<Kay>K</Kay></Tab>
            <Tab>更多<Caret $size={22} /></Tab>
            <HexIcon />
         </Tabs>

         <MaBar>
            <MaPick>MA<Caret $size={14} /></MaPick>
            <MaValue $width={107} $color="#a38ce0">5:2.01</MaValue>
            <MaValue $width={123} $color="#eea05f">10:1.86</MaValue>
            <MaValue $width={120} $color="#58b7ea">20:1.79</MaValue>
            <Spacer />
            <ToolButton>筹码</ToolButton>
            <ToolButton>区间</ToolButton>
            <ToolButton $width={113}>
               形态
               <svg width="14" height="24" viewBox="0 0 14 24" fill="none" stroke="#949494" strokeWidth="2.200"><path d="M1 1l11 11L1 23" /></svg>
            </ToolButton>
         </MaBar>

         <Charts>
            <PriceChart />
            <DateRow><span>2025/10/09</span><span>2026/02/11</span></DateRow>
            <VolumeChart />
            <MacdChart />
         </Charts>

         <Footer>
            <IndexBox>
               <IndexValue>
                  14160.93
                  <svg width="26" height="14" viewBox="0 0 26 14" fill="none" stroke="#777" strokeWidth="2.600"><path d="M1 13L13 1l12 12" /></svg>
               </IndexValue>
               <IndexName>深证成指 <b>-0.35%</b></IndexName>
            </IndexBox>
            <Action>融买</Action>
            <Action>融卖</Action>
            <Action>撤单</Action>
            <MoreAction>
               <MoreIcon />
               <MoreText>更多</MoreText>
            </MoreAction>
         </Footer>
         <HomeArea><HomeBar /></HomeArea>
      </Page>
   )
}

export default App
